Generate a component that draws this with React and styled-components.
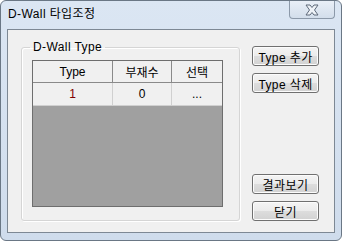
import React from 'react'
import styled, { createGlobalStyle } from 'styled-components'

const GlobalStyle = createGlobalStyle`
  body {
    margin: 0;
    background: #ffffff;
    font-family: "Liberation Sans", "Noto Sans CJK KR", sans-serif;
  }
`

const Window = styled.div`
  width: 342px;
  height: 241px;
  box-sizing: border-box;
  border: 1px solid #6a7785;
  border-radius: 6px;
  background: linear-gradient(#dbe6f3, #cfdcec);
  display: flex;
  flex-direction: column;
  overflow: hidden;
`

const TitleBar = styled.div`
  height: 28px;
  display: flex;
  align-items: flex-start;
  justify-content: space-between;
  padding-left: 7px;
`

const TitleText = styled.div`
  font-size: 12px;
  line-height: 14px;
  letter-spacing: 0.4px;
  margin-top: 6px;
  color: #000;
`

const CloseButton = styled.div`
  width: 46px;
  height: 18px;
  box-sizing: border-box;
  margin-right: 6px;
  border: 1px solid #8c99a9;
  border-top: none;
  border-radius: 0 0 4px 4px;
  background: linear-gradient(#e9eff7, #d3deeb);
  display: flex;
  align-items: center;
  justify-content: center;
`

const Client = styled.div`
  height: 204px;
  margin: 0 6px 0 6px;
  box-sizing: border-box;
  border: 1px solid #7d8894;
  background: #f0f0f0;
  display: flex;
  padding: 0 0 11px 13px;
`

const GroupBox = styled.fieldset`
  width: 219px;
  box-sizing: border-box;
  margin: 10px 0 0 0;
  padding: 6px 0 0 0;
  border: 1px solid #d5d5d5;
  border-radius: 3px;
  box-shadow: inset 1px 1px 0 #ffffff, 1px 1px 0 #ffffff;
  min-width: 0;
`

const Legend = styled.legend`
  font-size: 12px;
  line-height: 14px;
  letter-spacing: 0.4px;
  padding: 0 3px;
  margin-left: 8px;
  color: #000;
`

const Grid = styled.div`
  width: 191px;
  height: 147px;
  margin-left: 10px;
  box-sizing: border-box;
  border: 1px solid #6e6e6e;
  background: #a0a0a0;
  display: flex;
  flex-direction: column;
`

const Row = styled.div`
  display: grid;
  grid-template-columns: 80px 59px 1fr;
  height: ${({ header }) => (header ? '21px' : '22px')};
  background: #f0f0f0;
  border-bottom: 1px solid ${({ header }) => (header ? '#8a8a8a' : '#d0d0d0')};
`

const Cell = styled.div`
  display: flex;
  align-items: center;
  justify-content: center;
  font-size: 12px;
  color: ${({ tone }) => tone || '#000'};
  border-right: 1px solid ${({ header }) => (header ? '#8a8a8a' : '#d0d0d0')};
  &:last-child {
    border-right: none;
  }
`

const ButtonColumn = styled.div`
  display: flex;
  flex-direction: column;
  justify-content: space-between;
  margin: 16px 0 0 12px;
`

const ButtonGroup = styled.div`
  display: flex;
  flex-direction: column;
  gap: 7px;
`

const Button = styled.div`
  width: 67px;
  height: 20px;
  box-sizing: border-box;
  border: 1px solid #707070;
  border-radius: 3px;
  background: linear-gradient(#f4f4f4 0%, #ebebeb 50%, #dddddd 51%, #d2d2d2 100%);
  box-shadow: inset 0 0 0 1px #fcfcfc;
  display: flex;
  align-items: center;
  justify-content: center;
  font-size: 12px;
  letter-spacing: 0.4px;
  color: #000;
`

const CloseIcon = () => (
  <svg width="16" height="12" viewBox="0 0 16 12">
    <path
      d="M2 1 H6 L8 3.5 L10 1 H14 L10.5 6 L14 11 H10 L8 8.5 L6 11 H2 L5.5 6 Z"
      fill="#eef2f7"
      stroke="#5d6878"
      strokeWidth="1"
      strokeLinejoin="round"
    />
  </svg>
)

const App = () => {
  return (
    <>
      <GlobalStyle />
      <Window>
        <TitleBar>
          <TitleText>D-Wall 타입조정</TitleText>
          <CloseButton>
            <CloseIcon />
          </CloseButton>
        </TitleBar>
        <Client>
          <GroupBox>
            <Legend>D-Wall Type</Legend>
            <Grid>
              <Row header>
                <Cell header>Type</Cell>
                <Cell header>부재수</Cell>
                <Cell header>선택</Cell>
              </Row>
              <Row>
                <Cell tone="#800000">1</Cell>
                <Cell>0</Cell>
                <Cell>...</Cell>
              </Row>
            </Grid>
          </GroupBox>
          <ButtonColumn>
            <ButtonGroup>
              <Button>Type 추가</Button>
              <Button>Type 삭제</Button>
            </ButtonGroup>
            <ButtonGroup>
              <Button>결과보기</Button>
              <Button>닫기</Button>
            </ButtonGroup>
          </ButtonColumn>
        </Client>
      </Window>
    </>
  )
}

export default App
